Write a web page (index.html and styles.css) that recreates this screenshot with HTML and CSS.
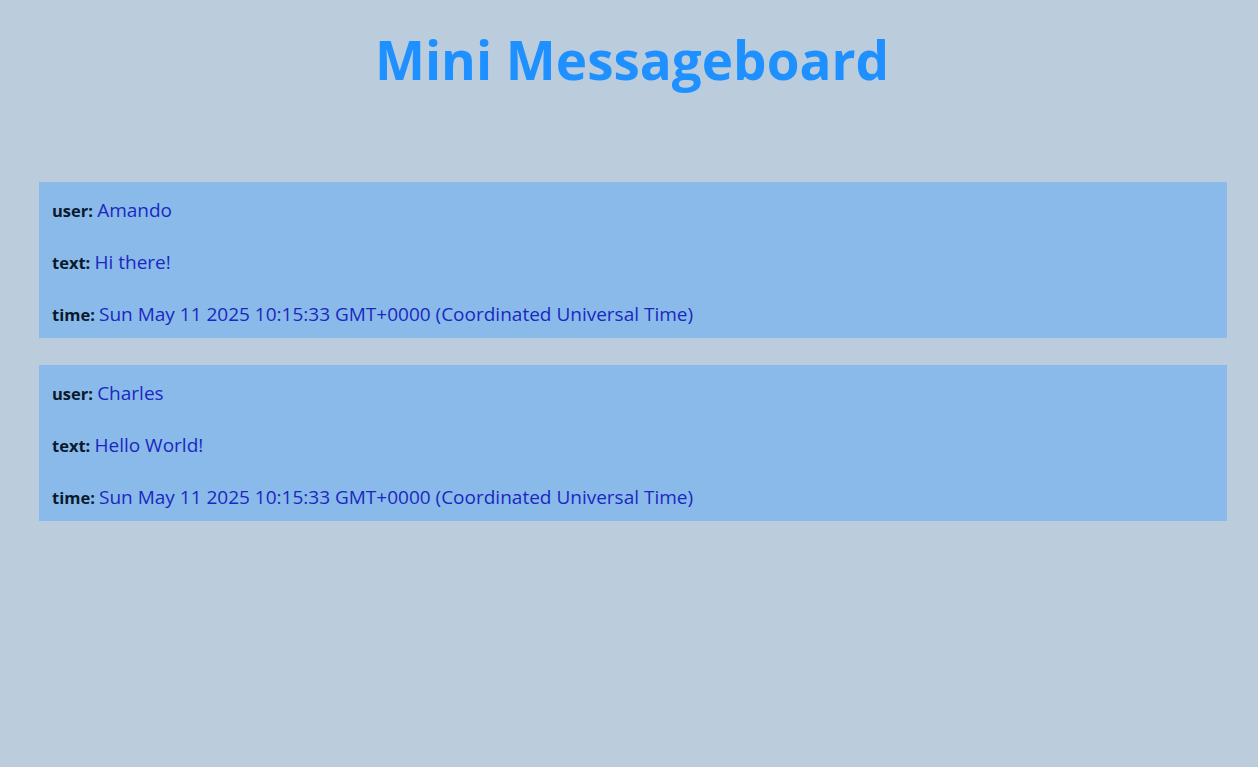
FILE: index.html
```html
<!DOCTYPE html>
<html lang="en">
<head>
<meta charset="utf-8">
<title>Mini Messageboard</title>
<link rel="stylesheet" href="styles.css">
</head>
<body>
<h1 class="title">Mini Messageboard</h1>
<main class="board">
  <section class="message">
    <p class="row"><strong class="label">user:</strong> <span class="value">Amando</span></p>
    <p class="row"><strong class="label">text:</strong> <span class="value">Hi there!</span></p>
    <p class="row"><strong class="label">time:</strong> <span class="value">Sun May 11 2025 10:15:33 GMT+0000 (Coordinated Universal Time)</span></p>
  </section>
  <section class="message">
    <p class="row"><strong class="label">user:</strong> <span class="value">Charles</span></p>
    <p class="row"><strong class="label">text:</strong> <span class="value">Hello World!</span></p>
    <p class="row"><strong class="label">time:</strong> <span class="value">Sun May 11 2025 10:15:33 GMT+0000 (Coordinated Universal Time)</span></p>
  </section>
</main>
</body>
</html>
```
FILE: styles.css
```css
html, body {
  margin: 0;
  padding: 0;
}
body {
  background: #bbccdc;
  font-family: "Open Sans", "Noto Sans", sans-serif;
  min-height: 100vh;
}
.title {
  margin: 0;
  padding-top: 24px;
  padding-left: 6px;
  text-align: center;
  font-size: 53px;
  line-height: 72px;
  font-weight: 700;
  color: #1e90ff;
}
.board {
  display: flex;
  flex-direction: column;
  gap: 27px;
  padding: 86px 31px 0 39px;
}
.message {
  background: #8abaea;
  display: flex;
  flex-direction: column;
  gap: 28px;
  padding: 16px 13px 12px;
}
.row {
  margin: 0;
  line-height: 24px;
  height: 24px;
  white-space: nowrap;
}
.label {
  font-size: 16.5px;
  font-weight: 700;
  color: #0a1a2e;
}
.value {
  font-size: 19px;
  color: #1a28c0;
}
```
